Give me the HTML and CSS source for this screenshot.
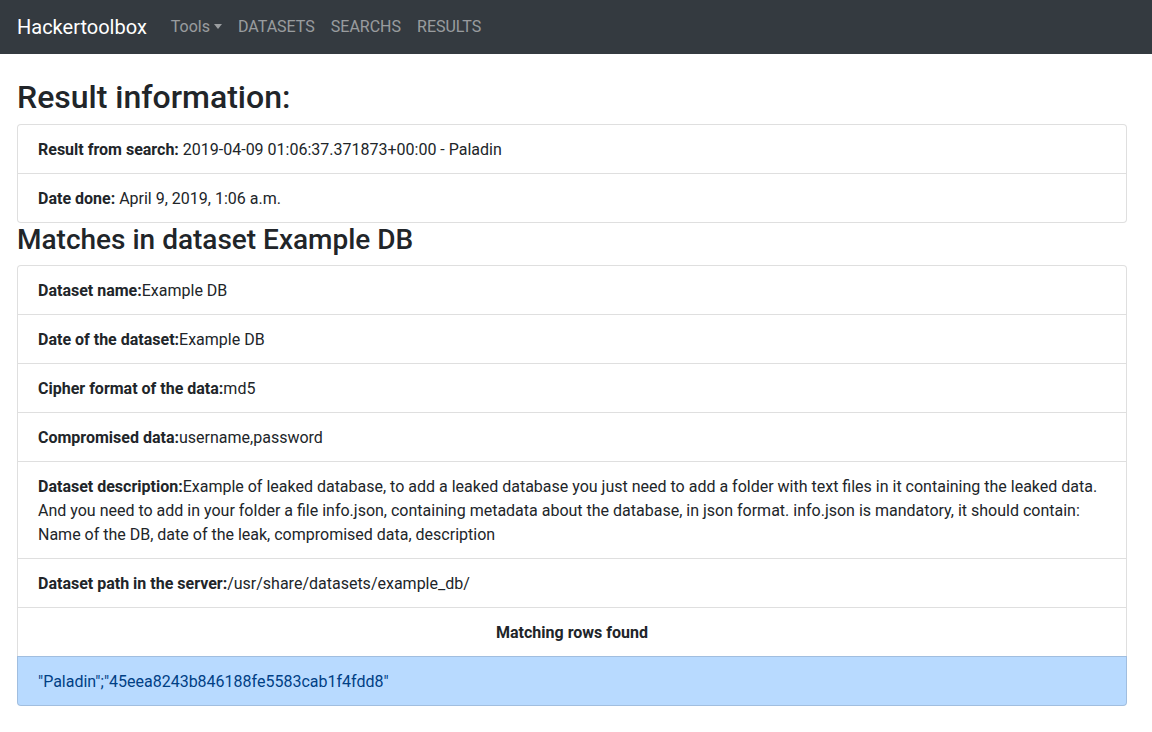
FILE: index.html
```html
<!DOCTYPE html>
<html lang="en">
<head>
<meta charset="utf-8">
<title>Hackertoolbox</title>
<link rel="stylesheet" href="styles.css">
</head>
<body>
<nav class="navbar">
  <a class="brand" href="#">Hackertoolbox</a>
  <ul class="nav">
    <li><a class="nav-link" href="#">Tools<span class="caret"></span></a></li>
    <li><a class="nav-link" href="#">DATASETS</a></li>
    <li><a class="nav-link" href="#">SEARCHS</a></li>
    <li><a class="nav-link" href="#">RESULTS</a></li>
  </ul>
</nav>
<main class="content">
  <h2 class="title">Result information:</h2>
  <ul class="list-group">
    <li class="item"><b>Result from search:</b> 2019-04-09 01:06:37.371873+00:00 - Paladin</li>
    <li class="item"><b>Date done:</b> April 9, 2019, 1:06 a.m.</li>
  </ul>
  <h3 class="subtitle">Matches in dataset Example DB</h3>
  <ul class="list-group">
    <li class="item"><b>Dataset name:</b>Example DB</li>
    <li class="item"><b>Date of the dataset:</b>Example DB</li>
    <li class="item"><b>Cipher format of the data:</b>md5</li>
    <li class="item"><b>Compromised data:</b>username,password</li>
    <li class="item"><b>Dataset description:</b>Example of leaked database, to add a leaked database you just need to add a folder with text files in it containing the leaked data. And you need to add in your folder a file info.json, containing metadata about the database, in json format. info.json is mandatory, it should contain: Name of the DB, date of the leak, compromised data, description</li>
    <li class="item"><b>Dataset path in the server:</b>/usr/share/datasets/example_db/</li>
    <li class="item center"><b>Matching rows found</b></li>
    <li class="item primary">"Paladin";"45eea8243b846188fe5583cab1f4fdd8"</li>
  </ul>
</main>
</body>
</html>
```
FILE: styles.css
```css
* { box-sizing: border-box; }
html, body {
  margin: 0;
  padding: 0;
  font-family: Roboto, "Liberation Sans", sans-serif;
  font-size: 16px;
  line-height: 1.5;
  color: #212529;
  background: #fff;
}
.navbar {
  display: flex;
  align-items: center;
  height: 54px;
  padding: 0 16px 0 17px;
  background: #343a40;
}
.brand {
  font-size: 20px;
  line-height: 30px;
  color: #fff;
  text-decoration: none;
  margin-right: 16px;
}
.nav {
  display: flex;
  list-style: none;
  margin: 0;
  padding: 0;
}
.nav-link {
  display: block;
  padding: 8px 8px;
  color: rgba(255,255,255,.5);
  text-decoration: none;
  font-size: 16px;
  line-height: 24px;
}
.caret {
  display: inline-block;
  margin-left: 4px;
  vertical-align: 3px;
  border-top: 5px solid;
  border-left: 4px solid transparent;
  border-right: 4px solid transparent;
}
.content {
  width: 1110px;
  margin-left: 17px;
  padding-top: 24px;
}
.title {
  margin: 0 0 8px;
  font-size: 32px;
  line-height: 1.2;
  font-weight: 500;
}
.subtitle {
  margin: 0 0 8px;
  font-size: 28px;
  line-height: 1.2;
  font-weight: 500;
}
.list-group {
  list-style: none;
  margin: 0;
  padding: 0;
  border-radius: 4px;
}
.item {
  padding: 13px 20px 11px;
  border: 1px solid rgba(0,0,0,.125);
  margin-bottom: -1px;
  background: #fff;
}
.item:first-child { border-top-left-radius: 4px; border-top-right-radius: 4px; }
.item:last-child { border-bottom-left-radius: 4px; border-bottom-right-radius: 4px; margin-bottom: 0; }
.item b { font-weight: 700; }
.center { text-align: center; }
.primary { background: #b8daff; color: #004085; }
```
